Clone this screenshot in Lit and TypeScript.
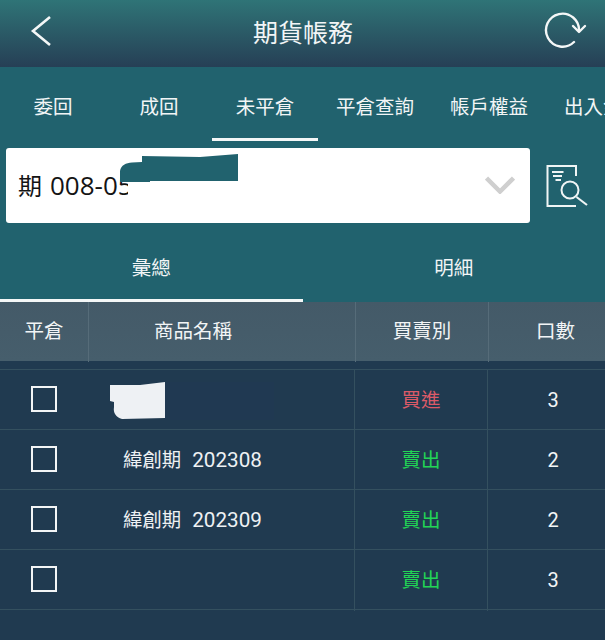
import { LitElement, html, css, svg } from "lit";
import { customElement } from "lit/decorators.js";

const TABS = ["委回", "成回", "未平倉", "平倉查詢", "帳戶權益", "出入金明細"];
const ROWS: { name: string; code: string; side: string; buy: boolean; qty: string }[] = [
  { name: "", code: "", side: "買進", buy: true, qty: "3" },
  { name: "緯創期", code: "202308", side: "賣出", buy: false, qty: "2" },
  { name: "緯創期", code: "202309", side: "賣出", buy: false, qty: "2" },
  { name: "", code: "", side: "賣出", buy: false, qty: "3" },
];

@customElement("app-root")
export class AppRoot extends LitElement {
  static styles = css`
    :host {
      display: block;
      width: 605px;
      height: 640px;
      overflow: hidden;
      background: #203a50;
      font-family: Roboto, "Noto Sans CJK TC", sans-serif;
      color: #f2f5f6;
    }
    .topbar {
      height: 67px;
      display: flex;
      align-items: center;
      justify-content: space-between;
      padding: 0 18px 0 26px;
      background: linear-gradient(#2f7477, #263f55);
      position: relative;
    }
    .refresh {
      margin-bottom: 5px;
    }
    .title {
      font-size: 25px;
      line-height: 67px;
      position: absolute;
      left: 253px;
      top: 0;
    }
    .teal {
      background: #21626e;
    }
    .tabs {
      height: 74px;
      display: flex;
      overflow: hidden;
      white-space: nowrap;
      font-size: 19.5px;
    }
    .tab {
      flex: none;
      box-sizing: border-box;
      min-width: 106px;
      padding: 0 18px;
      text-align: center;
      line-height: 82px;
      height: 74px;
      border-bottom: 3px solid transparent;
    }
    .tab.active {
      border-bottom-color: #f4f7f7;
    }
    .filter {
      display: flex;
      padding: 7px 0 0 6px;
      height: 74px;
      position: relative;
    }
    .select {
      width: 524px;
      height: 75px;
      background: #fff;
      border-radius: 3px;
      display: flex;
      align-items: center;
      justify-content: space-between;
      padding: 0 15px 0 12px;
      box-sizing: border-box;
      color: #141414;
      position: relative;
    }
    .acct {
      font-family: "Open Sans", "Noto Sans CJK TC", sans-serif;
      font-size: 26px;
      width: 110px;
      overflow: hidden;
      white-space: nowrap;
      display: flex;
      align-items: baseline;
      gap: 8px;
      margin-top: -2px;
    }
    .acct-cjk {
      font-size: 24px;
    }
    .chev {
      margin-bottom: 2px;
    }
    .mask-teal {
      position: absolute;
      left: 114px;
      top: 6px;
    }
    .docicon {
      margin: 17px 0 0 16px;
    }
    .subtabs {
      display: flex;
      height: 80px;
      font-size: 19.5px;
    }
    .subtab {
      width: 302.5px;
      box-sizing: border-box;
      text-align: center;
      line-height: 94px;
      border-bottom: 3px solid transparent;
    }
    .subtab.active {
      border-bottom-color: #f4f7f7;
    }
    .cols {
      display: grid;
      grid-template-columns: 88px 267px 133px 117px;
    }
    .head {
      height: 59px;
      background: linear-gradient(#445a68, #465e6c);
      font-size: 19.5px;
      line-height: 60px;
    }
    .head > div {
      text-align: center;
      border-left: 1px solid #566c79;
      box-sizing: border-box;
    }
    .head > div:first-child {
      border-left: 0;
    }
    .head .name {
      text-align: left;
      padding-left: 65px;
    }
    .qty {
      padding-left: 17px;
    }
    .rows {
      margin-top: 8px;
      border-top: 1px solid #34505f;
      position: relative;
    }
    .row {
      height: 60px;
      box-sizing: border-box;
      border-bottom: 1px solid #34505f;
      font-size: 20.7px;
      align-items: stretch;
      line-height: 61px;
    }
    .row > div {
      box-sizing: border-box;
      text-align: center;
    }
    .row .name {
      display: flex;
      gap: 11px;
      padding-left: 35px;
      color: #eef1f3;
    }
    .cjk {
      font-size: 19.4px;
    }
    .row .side {
      font-size: 19.5px;
      border-left: 1px solid #34505f;
      border-right: 1px solid #34505f;
      margin-left: -1px;
    }
    .row .qty {
      padding-left: 13px;
      font-size: 20px;
    }
    .buy {
      color: #dc5a68;
    }
    .sell {
      color: #22d455;
    }
    .check-cell {
      display: flex;
      align-items: center;
      justify-content: center;
      padding-bottom: 3px;
    }
    .check {
      width: 26px;
      height: 26px;
      box-sizing: border-box;
      border: 2px solid #f2f5f6;
    }
    .mask-row {
      position: absolute;
      left: 108px;
      top: 10px;
    }
    svg {
      display: block;
    }
  `;

  render() {
    return html`
      <div class="topbar">
        <svg width="28" height="36" viewBox="0 0 28 36" fill="none" stroke="#f4f7f7" stroke-width="2.6">
          <path d="M24 1 L7 15 L24 29" />
        </svg>
        <div class="title">期貨帳務</div>
        <svg class="refresh" width="44" height="40" viewBox="0 0 44 40" fill="none" stroke="#f4f7f7" stroke-width="2.4" stroke-linecap="round" stroke-linejoin="round">
          <path d="M36 20 A16.5 16.5 0 1 0 31 31" />
          <path d="M30 15 L36 21 L42 15" />
        </svg>
      </div>
      <div class="teal">
        <div class="tabs">
          ${TABS.map((t, i) => html`<div class="tab ${i === 2 ? "active" : ""}">${t}</div>`)}
        </div>
        <div class="filter">
          <div class="select">
            <div class="acct"><span class="acct-cjk">期</span><span>008-05</span></div>
            <svg class="chev" width="30" height="18" viewBox="0 0 30 18" fill="none" stroke="#cfcfcf" stroke-width="4.5">
              <path d="M1.5 2 L15 15.5 L28.5 2" />
            </svg>
            <svg class="mask-teal" width="120" height="30" viewBox="0 0 120 30">
              <path fill="#21626e" d="M0 28 V17 C1 11 6 9 12 8.5 L22 8 V2 L80 3 L118 0 V27 L30 27 L30 28 Z" />
            </svg>
          </div>
          <svg class="docicon" width="44" height="44" viewBox="0 0 44 44" fill="none" stroke="#f0f5f5" stroke-width="2">
            <path d="M30 11 V1 H1.5 V41 H30" />
            <path d="M6 7 H17.5 M7 11 H16 M9.5 15 H15" />
            <circle cx="24" cy="25" r="8.5" />
            <path d="M30.5 32 L41 40" stroke-width="2.2" />
          </svg>
        </div>
        <div class="subtabs">
          <div class="subtab active">彙總</div>
          <div class="subtab">明細</div>
        </div>
      </div>
      <div class="cols head">
        <div>平倉</div>
        <div class="name">商品名稱</div>
        <div>買賣別</div>
        <div class="qty">口數</div>
      </div>
      <div class="rows">
        ${ROWS.map(
          (r) => html`
            <div class="cols row">
              <div class="check-cell"><div class="check"></div></div>
              <div class="name"><span class="cjk">${r.name}</span><span>${r.code}</span></div>
              <div class="side ${r.buy ? "buy" : "sell"}">${r.side}</div>
              <div class="qty">${r.qty}</div>
            </div>
          `
        )}
        <svg class="mask-row" width="170" height="44" viewBox="0 0 170 44">
          ${svg`
            <rect x="56" y="2" width="110" height="38" fill="#22375a" opacity="0.22" />
            <path fill="#eef1f4" d="M2 5 L32 5 L57 2 V38 L14 39 C8 37 5 33 6 27 L6 22 L2 21 Z" />
          `}
        </svg>
      </div>
    `;
  }
}
